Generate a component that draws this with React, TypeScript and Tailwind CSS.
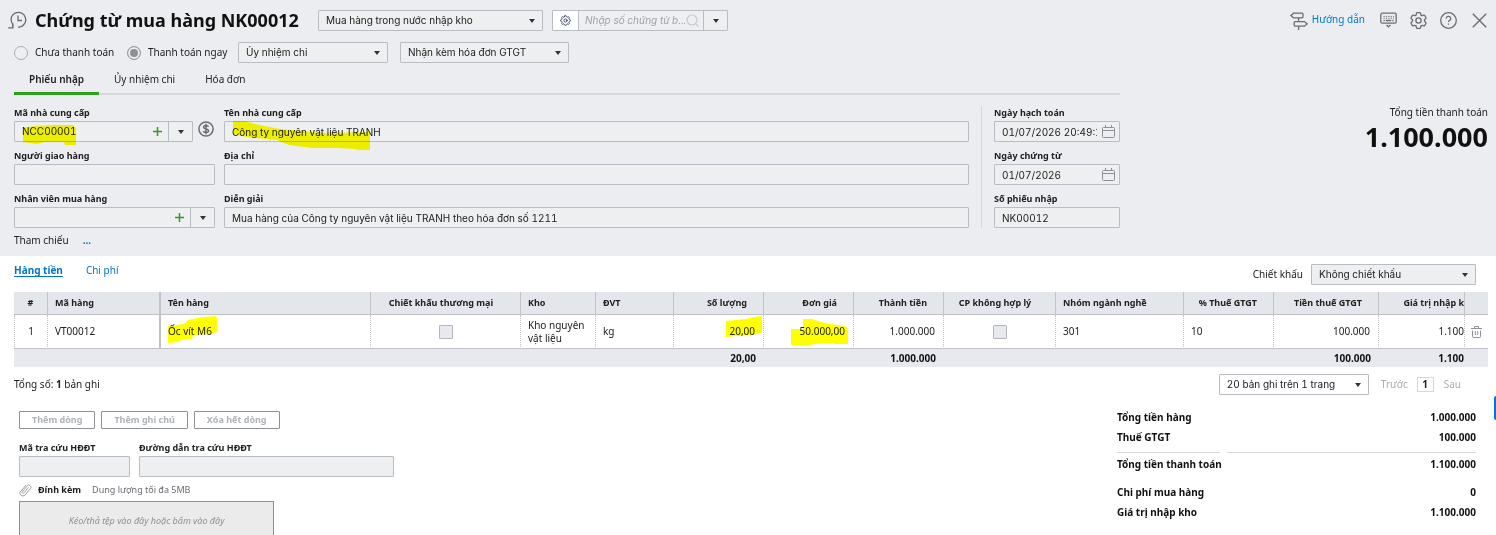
import React, { useState } from 'react';
import { HiOutlineCog6Tooth, HiOutlineCog8Tooth } from 'react-icons/hi2';

const fieldBox = "h-[21px] border border-[#b8bcc3] rounded-[1px] bg-[#eeeff1]";
const fieldText = "font-['Inter',sans-serif] tabular-nums text-[10px] text-[#212121] outline-none";
const labelText = "block h-[13px] leading-[13px] text-[9px] font-bold text-[#212121] whitespace-nowrap";

const Caret = () => (
  <svg width="6" height="4" viewBox="0 0 6 4" className="shrink-0 pointer-events-none">
    <path d="M0 0h6L3 4z" fill="#333" />
  </svg>
);

const Plus = () => (
  <svg width="9" height="9" viewBox="0 0 9 9">
    <path d="M4.5 0v9M0 4.5h9" stroke="#2ca01c" strokeWidth="1.5" />
  </svg>
);

const HistoryIcon = () => (
  <svg width="19" height="19" viewBox="0 0 19 19" fill="none" stroke="#6b6c72" strokeWidth="1.3">
    <path d="M4.700 17V13C2.600 10.500 2.600 6.500 4.500 4.200A7.400 7.400 0 1 1 10 16.200" />
    <path d="M10 4.500v5h4" />
    <path d="M.2 16.800h4.500v-4.600" />
  </svg>
);

const SignpostIcon = () => (
  <svg width="18" height="18" viewBox="0 0 18 18" fill="none" stroke="#6b6c72" strokeWidth="1.3">
    <path d="M3.500 1.200H12a1 1 0 0 1 1 1v2.600a1 1 0 0 1-1 1H3.500L.9 3.500z" />
    <path d="M14.500 9.600H5.200a1 1 0 0 0-1 1v2.600a1 1 0 0 0 1 1h9.300l2.600-2.300z" />
    <path d="M8.600 5.800v3.800M8.600 14.200V18" />
  </svg>
);

const KeyboardIcon = () => (
  <svg width="17" height="17" viewBox="0 0 17 17" fill="none" stroke="#6b6c72" strokeWidth="1.3">
    <rect x=".8" y="1.2" width="15.4" height="10" rx="1.5" />
    <path d="M3.500 4.400h10.500M3.500 6.200h10.500" strokeDasharray="1.200 1.200" strokeWidth="1" />
    <path d="M3.500 8.500h1.200M5.800 8.500h5.400M12.300 8.500h1.200" />
    <path d="m6.600 13 1.900 1.900 1.900-1.900" />
  </svg>
);

const HelpIcon = () => (
  <svg width="17" height="17" viewBox="0 0 17 17" fill="none" stroke="#6b6c72" strokeWidth="1.3">
    <circle cx="8.5" cy="8.5" r="7.8" />
    <path d="M6.200 6.600a2.300 2.200 0 1 1 3.500 1.800c-.8.5-1.200.8-1.200 1.700M8.500 11.400v1.400" />
  </svg>
);

const CloseIcon = () => (
  <svg width="15" height="15" viewBox="0 0 15 15" fill="none" stroke="#6b6c72" strokeWidth="1.4">
    <path d="m.8.8 13.400 13.400M14.200.8.8 14.200" />
  </svg>
);

const DollarIcon = () => (
  <svg width="16" height="16" viewBox="0 0 16 16" fill="none" stroke="#6b6c72" strokeWidth="1.5">
    <circle cx="8" cy="8" r="7.1" />
    <path d="M10.500 5.800C10.200 4.900 9.300 4.500 8 4.500c-1.400 0-2.400.6-2.400 1.700 0 2.500 5 1.100 5 3.600 0 1.100-1.100 1.700-2.600 1.700-1.400 0-2.400-.5-2.700-1.500M8 2.800v10.400" />
  </svg>
);

const CalendarIcon = () => (
  <svg width="13" height="13" viewBox="0 0 13 13" fill="none" stroke="#8d9096">
    <rect x=".5" y="2.5" width="12" height="10" rx="1" />
    <path d="M.5 5.500h12M3.500 0v2.500M9.500 0v2.500" />
  </svg>
);

const TrashIcon = () => (
  <svg width="11" height="12" viewBox="0 0 11 12" fill="none" stroke="#8d9096">
    <path d="M0 2.500h11M3.500 2.500v-2h4v2M1.500 4.500v6a1 1 0 0 0 1 1h6a1 1 0 0 0 1-1v-6M4.300 5v4M6.700 5v4" />
  </svg>
);

const ClipIcon = () => (
  <svg width="13" height="14" viewBox="0 0 13 14" fill="none" stroke="#9a9da3">
    <path d="m9.500 4.400-4.600 5.400c-.9 1-2.300-.2-1.500-1.200l5-5.900c1.500-1.700 4.900.6 3 3l-5.400 6.300c-2.200 2.500-6.700-.6-4.600-3.200l5.800-6.900" />
  </svg>
);

interface SelectProps {
  label: string;
  options: string[];
  className: string;
}

const Select: React.FC<SelectProps> = ({ label, options, className }) => (
  <div className={`relative shrink-0 ${className}`}>
    <select aria-label={label} className={`${fieldBox} ${fieldText} w-full appearance-none pl-[7px] pr-5`}>
      {options.map((o) => <option key={o}>{o}</option>)}
    </select>
    <span className="absolute right-2 inset-y-0 flex items-center pointer-events-none"><Caret /></span>
  </div>
);

interface FieldProps {
  id: string;
  label: string;
  value?: string;
  calendar?: boolean;
  className?: string;
  mark?: React.ReactNode;
}

const Field: React.FC<FieldProps> = ({ id, label, value = '', calendar, className = '', mark }) => (
  <div className={className}>
    <label htmlFor={id} className={labelText}>{label}</label>
    <div className="relative mt-[2px]">
      <input id={id} type="text" defaultValue={value} className={`${fieldBox} ${fieldText} block w-full pl-[7px] ${calendar ? 'pr-[22px]' : 'pr-2'}`} />
      {calendar && <button aria-label="Chọn ngày" className="absolute right-[5px] top-1"><CalendarIcon /></button>}
      {mark}
    </div>
  </div>
);

const ComboField: React.FC<FieldProps> = ({ id, label, value = '', className = '', mark }) => (
  <div className={className}>
    <label htmlFor={id} className={labelText}>{label}</label>
    <div className={`${fieldBox} relative mt-[2px] flex items-stretch`}>
      <input id={id} type="text" defaultValue={value} className={`${fieldText} flex-1 min-w-0 pl-[7px]`} />
      <button aria-label="Thêm" className="px-[6px]"><Plus /></button>
      <button aria-label="Mở danh sách" className="w-6 border-l border-[#b8bcc3] flex items-center justify-center"><Caret /></button>
      {mark}
    </div>
  </div>
);

const Mark: React.FC<{ className: string; w: number; h: number; d: string }> = ({ className, w, h, d }) => (
  <svg width={w} height={h} viewBox={`0 0 ${w} ${h}`} className={`absolute mix-blend-multiply pointer-events-none ${className}`}>
    <path d={d} fill="#ffff00" />
  </svg>
);

const th = "h-[23px] border-b border-r border-[#c0c2c6] text-[9px] font-bold pl-[7px] whitespace-nowrap";
const td = "h-[34px] border-b border-b-[#c0c2c6] border-r border-r-[#c0c2c6] px-[7px] leading-[13px]";
const dotted = "[border-right-style:dotted]";
const tf = "h-[18px] text-right font-bold text-[#111]";

const columns = [
  { name: '#', width: 'w-[34px]', align: 'text-center pr-[7px]' },
  { name: 'Mã hàng', width: 'w-[113px]', align: 'text-left border-r-2' },
  { name: 'Tên hàng', width: '', align: 'text-left' },
  { name: 'Chiết khấu thương mại', width: 'w-[150px]', align: 'text-center pr-4' },
  { name: 'Kho', width: 'w-[75px]', align: 'text-left' },
  { name: 'ĐVT', width: 'w-[78px]', align: 'text-left' },
  { name: 'Số lượng', width: 'w-[90px]', align: 'text-right pr-4' },
  { name: 'Đơn giá', width: 'w-[90px]', align: 'text-right pr-4' },
  { name: 'Thành tiền', width: 'w-[90px]', align: 'text-right pr-4' },
  { name: 'CP không hợp lý', width: 'w-[112px]', align: 'text-center pr-4' },
  { name: 'Nhóm ngành nghề', width: 'w-[128px]', align: 'text-left' },
  { name: '% Thuế GTGT', width: 'w-[90px]', align: 'text-right pr-4' },
  { name: 'Tiền thuế GTGT', width: 'w-[105px]', align: 'text-right pr-4' },
  { name: 'Giá trị nhập k', width: 'w-[86px]', align: 'text-right' },
];

const Totals: React.FC<{ label: string; value: string; className?: string }> = ({ label, value, className = '' }) => (
  <div className={`flex justify-between h-5 leading-5 ${className}`}>
    <span>{label}</span>
    <span>{value}</span>
  </div>
);

const Tick = ({ label }: { label: string }) => (
  <input type="checkbox" aria-label={label} className="appearance-none block mx-auto size-[14px] border border-[#b5b7bb] rounded-[1px] bg-[#e8e9ee]" />
);

export default function App() {
  const [tab, setTab] = useState('Phiếu nhập');
  const [payNow, setPayNow] = useState(true);
  const radio = "appearance-none size-[14px] rounded-full border border-[#a9abb0] bg-[#eeeff1] checked:border-[#9a9ca1] checked:bg-[#8d9096] checked:shadow-[inset_0_0_0_2px_#eeeff1]";

  return (
    <div className="relative h-screen overflow-hidden bg-white font-['Noto_Sans',sans-serif] text-[10px] text-[#212121]">
      <section className="h-64 bg-[#ecedf1]">
        {/* Title bar */}
        <header className="flex items-center pt-[10px] pl-2 pr-[9px] h-[31px]">
          <button aria-label="Lịch sử" className="w-[27px]"><HistoryIcon /></button>
          <h1 className="w-[283px] text-[18px] leading-5 pb-[2px] font-bold text-[#111] whitespace-nowrap">Chứng từ mua hàng NK00012</h1>
          <Select label="Loại chứng từ" options={['Mua hàng trong nước nhập kho']} className="w-[225px]" />
          <div className={`${fieldBox} ml-[9px] flex w-44`}>
            <button aria-label="Thiết lập" className="w-[26px] border-r border-[#b8bcc3] bg-white flex items-center justify-center">
              <HiOutlineCog8Tooth className="size-[13px] text-[#1f2b45]" />
            </button>
            <input aria-label="Nhập số chứng từ" placeholder="Nhập số chứng từ b..." className={`${fieldText} flex-1 min-w-0 pl-[6px] italic placeholder:text-[#a0a2a7]`} />
            <button aria-label="Tìm kiếm" className="pr-1">
              <svg width="13" height="13" viewBox="0 0 13 13" fill="none" stroke="#c7c9cd" strokeWidth="1.2"><circle cx="6" cy="6" r="5" /><path d="m10 10 2.500 2.500" /></svg>
            </button>
            <button aria-label="Mở danh sách" className="w-6 border-l border-[#b8bcc3] flex items-center justify-center"><Caret /></button>
          </div>
          <div className="ml-auto flex items-center">
            <SignpostIcon />
            <a href="#" className="ml-1 text-[#0077c5] leading-4 pb-1">Hướng dẫn</a>
            <button aria-label="Phím tắt" className="ml-[15px]"><KeyboardIcon /></button>
            <button aria-label="Cài đặt" className="ml-[11px]"><HiOutlineCog6Tooth className="size-[21px] text-[#6b6c72]" /></button>
            <button aria-label="Trợ giúp" className="ml-[11px]"><HelpIcon /></button>
            <button aria-label="Đóng" className="ml-[15px]"><CloseIcon /></button>
          </div>
        </header>

        {/* Payment options */}
        <div className="flex items-center pl-[14px] mt-[11px] h-[21px]">
          <label className="flex items-center gap-[7px] w-[113px]">
            <input type="radio" name="pay" className={radio} checked={!payNow} onChange={() => setPayNow(false)} />
            Chưa thanh toán
          </label>
          <label className="flex items-center gap-[7px] w-[111px]">
            <input type="radio" name="pay" className={radio} checked={payNow} onChange={() => setPayNow(true)} />
            Thanh toán ngay
          </label>
          <Select label="Hình thức thanh toán" options={['Ủy nhiệm chi']} className="w-[150px]" />
          <Select label="Hóa đơn" options={['Nhận kèm hóa đơn GTGT']} className="w-[169px] ml-3" />
        </div>

        <div className="ml-[14px] mr-[376px] mt-[7px] h-[25px] flex border-b-2 border-[#d4d7dc]">
          {['Phiếu nhập', 'Ủy nhiệm chi', 'Hóa đơn'].map((t) => (
            <button
              key={t}
              onClick={() => setTab(t)}
              className={`h-[25px] px-[15px] pb-[3px] border-b-3 whitespace-nowrap ${tab === t ? 'font-semibold border-[#2ca01c]' : 'border-transparent'}`}
            >
              {t}
            </button>
          ))}
        </div>

        {/* Voucher form */}
        <div className="flex mt-[11px] ml-[14px] mr-2">
          <div className="w-[201px] shrink-0 flex flex-col gap-[7px]">
            <div className="flex items-end">
              <ComboField
                id="vendor"
                label="Mã nhà cung cấp"
                value="NCC00001"
                className="w-[179px]"
                mark={<Mark className="left-2 top-[3px]" w={53} h={20} d="M0 3 12 1 30 0 50 0 53 3V20H42L41 17 22 17 14 19 0 17z" />}
              />
              <button aria-label="Công nợ" className="ml-[5px] mb-[5px]"><DollarIcon /></button>
            </div>
            <Field id="deliver" label="Người giao hàng" />
            <ComboField id="staff" label="Nhân viên mua hàng" />
          </div>
          <div className="flex-1 ml-[9px] flex flex-col gap-[7px]">
            <Field
              id="vendorName"
              label="Tên nhà cung cấp"
              value="Công ty nguyên vật liệu TRANH"
              mark={<Mark className="left-[9px] top-0" w={137} h={30} d="M0 0H12L26 4 47 8 90 12 137 11V29H124L123 28 105 27 80 27 56 24 44 19 14 16 0 13z" />}
            />
            <Field id="address" label="Địa chỉ" />
            <Field id="desc" label="Diễn giải" value="Mua hàng của Công ty nguyên vật liệu TRANH theo hóa đơn số 1211" />
          </div>
          <div className="w-[139px] shrink-0 ml-3 pl-3 border-l border-[#d4d7dc] flex flex-col gap-[7px]">
            <Field id="postDate" label="Ngày hạch toán" value="01/07/2026 20:49:15" calendar />
            <Field id="docDate" label="Ngày chứng từ" value="01/07/2026" calendar />
            <Field id="docNo" label="Số phiếu nhập" value="NK00012" />
          </div>
          <div className="w-[368px] shrink-0 text-right">
            <div className="leading-3">Tổng tiền thanh toán</div>
            <div className="text-[27px] leading-8 mt-[3px] font-bold text-[#111]">1.100.000</div>
          </div>
        </div>
        <div className="ml-[14px] mt-1 leading-4">
          Tham chiếu<a href="#" className="ml-[14px] font-bold text-[#0077c5]">...</a>
        </div>
      </section>

      {/* Detail tabs */}
      <div className="flex items-start pl-[14px] pr-5 pt-2 h-9">
        <a href="#" className="leading-[13px] text-[#0077c5] font-bold underline underline-offset-2">Hàng tiền</a>
        <a href="#" className="leading-[13px] text-[#0077c5] ml-[23px]">Chi phí</a>
        <span className="ml-auto mr-2 leading-[21px]">Chiết khấu</span>
        <Select label="Chiết khấu" options={['Không chiết khấu']} className="w-[165px]" />
      </div>

      <div className="ml-[14px] mr-2">
        <table className="w-full table-fixed border-separate border-spacing-0">
          <thead className="bg-[#e3e6eb]">
            <tr>
              {columns.map((c) => <th key={c.name} className={`${th} ${c.width} ${c.align}`}>{c.name}</th>)}
              <th className="w-[23px] border-b border-[#c0c2c6]" aria-label="Xóa" />
            </tr>
          </thead>
          <tbody>
            <tr>
              <td className={`${td} ${dotted} border-l border-l-[#c0c2c6] [border-left-style:dotted] text-center`}>1</td>
              <td className={`${td} border-r-2`}>VT00012</td>
              <td className={`${td} ${dotted} relative`}>
                Ốc vít M6
                <Mark className="left-[7px] top-px" w={49} h={27} d="M0 10 16 8 20 4 35 1 48 0 49 2V16L42 18 26 19 23 23 13 24 11 26 0 27z" />
              </td>
              <td className={`${td} ${dotted}`}><Tick label="Chiết khấu thương mại" /></td>
              <td className={`${td} ${dotted}`}>Kho nguyên vật liệu</td>
              <td className={`${td} ${dotted}`}>kg</td>
              <td className={`${td} ${dotted} relative text-right pr-2`}>
                20,00
                <Mark className="right-px top-px" w={36} h={21} d="M0 5 20 3 27 1 36 0V17L26 19 12 20 0 21z" />
              </td>
              <td className={`${td} ${dotted} relative text-right pr-2`}>
                50.000,00
                <Mark className="right-[5px] top-1" w={57} h={26} d="M12 0H21L30 3 39 5 54 7 57 9V25H44L41 24 24 25 20 26H0V10H12z" />
              </td>
              <td className={`${td} ${dotted} text-right pr-2`}>1.000.000</td>
              <td className={`${td} ${dotted}`}><Tick label="CP không hợp lý" /></td>
              <td className={`${td} ${dotted}`}>301</td>
              <td className={`${td} ${dotted}`}>10</td>
              <td className={`${td} ${dotted} text-right pr-2`}>100.000</td>
              <td className={`${td} ${dotted} text-right pr-0`}>1.100</td>
              <td className="border-b border-[#c0c2c6]">
                <button aria-label="Xóa dòng" className="block mx-auto"><TrashIcon /></button>
              </td>
            </tr>
          </tbody>
          <tfoot className="bg-[#e8e9ee]">
            <tr>
              <td colSpan={6} />
              <td className={`${tf} pr-2`}>20,00</td>
              <td />
              <td className={`${tf} pr-2`}>1.000.000</td>
              <td colSpan={3} />
              <td className={`${tf} pr-2`}>100.000</td>
              <td className={`${tf} pr-px`}>1.100</td>
              <td />
            </tr>
          </tfoot>
        </table>
      </div>

      <div className="flex items-center pl-[14px] pr-[35px] mt-[7px] h-[21px]">
        <span>Tổng số: <b>1</b> bản ghi</span>
        <div className="ml-auto flex items-center">
          <Select label="Số bản ghi" options={['20 bản ghi trên 1 trang']} className="w-[150px] [&>select]:bg-white" />
          <button className="ml-3 text-[#a9abb0]">Trước</button>
          <button className="ml-[9px] mr-[10px] w-[17px] h-[15px] leading-[13px] border border-[#d4d7dc] font-bold">1</button>
          <button className="text-[#a9abb0]">Sau</button>
        </div>
      </div>

      {/* Footer */}
      <div className="flex justify-between pl-[19px] pr-5 mt-3">
        <div>
          <div className="flex gap-[6px] mt-1">
            {['Thêm dòng', 'Thêm ghi chú', 'Xóa hết dòng'].map((b) => (
              <button key={b} disabled className="h-[18px] px-3 border border-[#8d9096] rounded-[1px] text-[9px] leading-4 font-bold text-[#b0b2b6]">{b}</button>
            ))}
          </div>
          <div className="flex gap-[9px] mt-3">
            <Field id="lookupCode" label="Mã tra cứu HĐĐT" className="w-[111px]" />
            <Field id="lookupUrl" label="Đường dẫn tra cứu HĐĐT" className="w-[255px]" />
          </div>
          <div className="flex items-center mt-[6px] h-[14px] text-[9px]">
            <ClipIcon />
            <b className="ml-[6px]">Đính kèm</b>
            <span className="ml-[11px] text-[#6b6c72]">Dung lượng tối đa 5MB</span>
          </div>
          <button className="mt-1 block w-[255px] h-10 border border-[#8d9096] bg-[#ebebeb] text-[9px] italic text-[#8d9096]">
            Kéo/thả tệp vào đây hoặc bấm vào đây
          </button>
        </div>
        <div className="w-[359px] font-bold text-[#111]">
          <Totals label="Tổng tiền hàng" value="1.000.000" />
          <Totals label="Thuế GTGT" value="100.000" />
          <div className="flex gap-[7px] mt-[5px] mb-px">
            <div className="w-[103px] border-t border-[#d4d7dc]" />
            <div className="flex-1 border-t border-[#d4d7dc]" />
          </div>
          <Totals label="Tổng tiền thanh toán" value="1.100.000" />
          <Totals label="Chi phí mua hàng" value="0" className="mt-2" />
          <Totals label="Giá trị nhập kho" value="1.100.000" />
        </div>
      </div>

      <button aria-label="Trợ lý" className="absolute right-0 top-[396px] w-[2px] h-6 rounded-l-[2px] bg-[#0073e6]" />
    </div>
  );
}
